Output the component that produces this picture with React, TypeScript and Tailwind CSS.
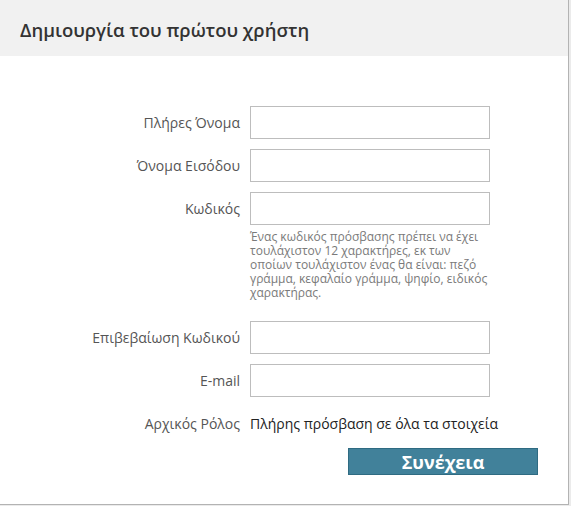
import React from 'react'

const font = { fontFamily: '"Open Sans", "Liberation Sans", sans-serif' }

function Field({ label, type = 'text', children }: { label: string; type?: string; children?: React.ReactNode }) {
  return (
    <div className="flex items-start">
      <label className="w-[250px] pr-[10px] text-right text-[14px] leading-[33px] text-[#555]">{label}</label>
      <div className="w-[240px]">
        <input type={type} className="block w-[240px] h-[33px] border border-[#bdbdbd] bg-white outline-none px-2 text-[13px]" />
        {children}
      </div>
    </div>
  )
}

export default function App() {
  return (
    <div className="w-[571px] h-[506px] bg-[#ebebeb]" style={font}>
      <div className="w-[569px] h-[505px] bg-white border-r border-b border-[#b3b3b3] flex flex-col">
        {/* Header */}
        <div className="h-[56px] bg-[#f1f1f1] pt-[16px] pl-[20px]">
          <h1 className="text-[18.5px] leading-normal font-semibold text-[#333]">Δημιουργία του πρώτου χρήστη</h1>
        </div>

        {/* Form */}
        <div className="pt-[50px] flex flex-col">
          <div className="flex flex-col gap-[10px]">
            <Field label="Πλήρες Όνομα" />
            <Field label="Όνομα Εισόδου" />
            <Field label="Κωδικός" type="password">
              <p className="mt-[5px] text-[12px] leading-[14px] text-[#7a7a7a]">
                Ένας κωδικός πρόσβασης πρέπει να έχει τουλάχιστον 12 χαρακτήρες, εκ των οποίων τουλάχιστον ένας θα είναι: πεζό γράμμα, κεφαλαίο γράμμα, ψηφίο, ειδικός χαρακτήρας.
              </p>
            </Field>
          </div>
          <div className="flex flex-col gap-[10px] mt-[21px]">
            <Field label="Επιβεβαίωση Κωδικού" type="password" />
            <Field label="E-mail" />
          </div>
          <div className="flex items-center mt-[16px]">
            <span className="w-[250px] pr-[10px] text-right text-[14px] text-[#555]">Αρχικός Ρόλος</span>
            <span className="text-[14px] text-[#222] whitespace-nowrap">Πλήρης πρόσβαση σε όλα τα στοιχεία</span>
          </div>
          <div className="flex mt-[14px] pl-[348px]">
            <button className="w-[190px] h-[27px] bg-[#41819a] border border-[#2f6b82] text-white text-[18px] font-bold leading-none">
              Συνέχεια
            </button>
          </div>
        </div>
      </div>
    </div>
  )
}
